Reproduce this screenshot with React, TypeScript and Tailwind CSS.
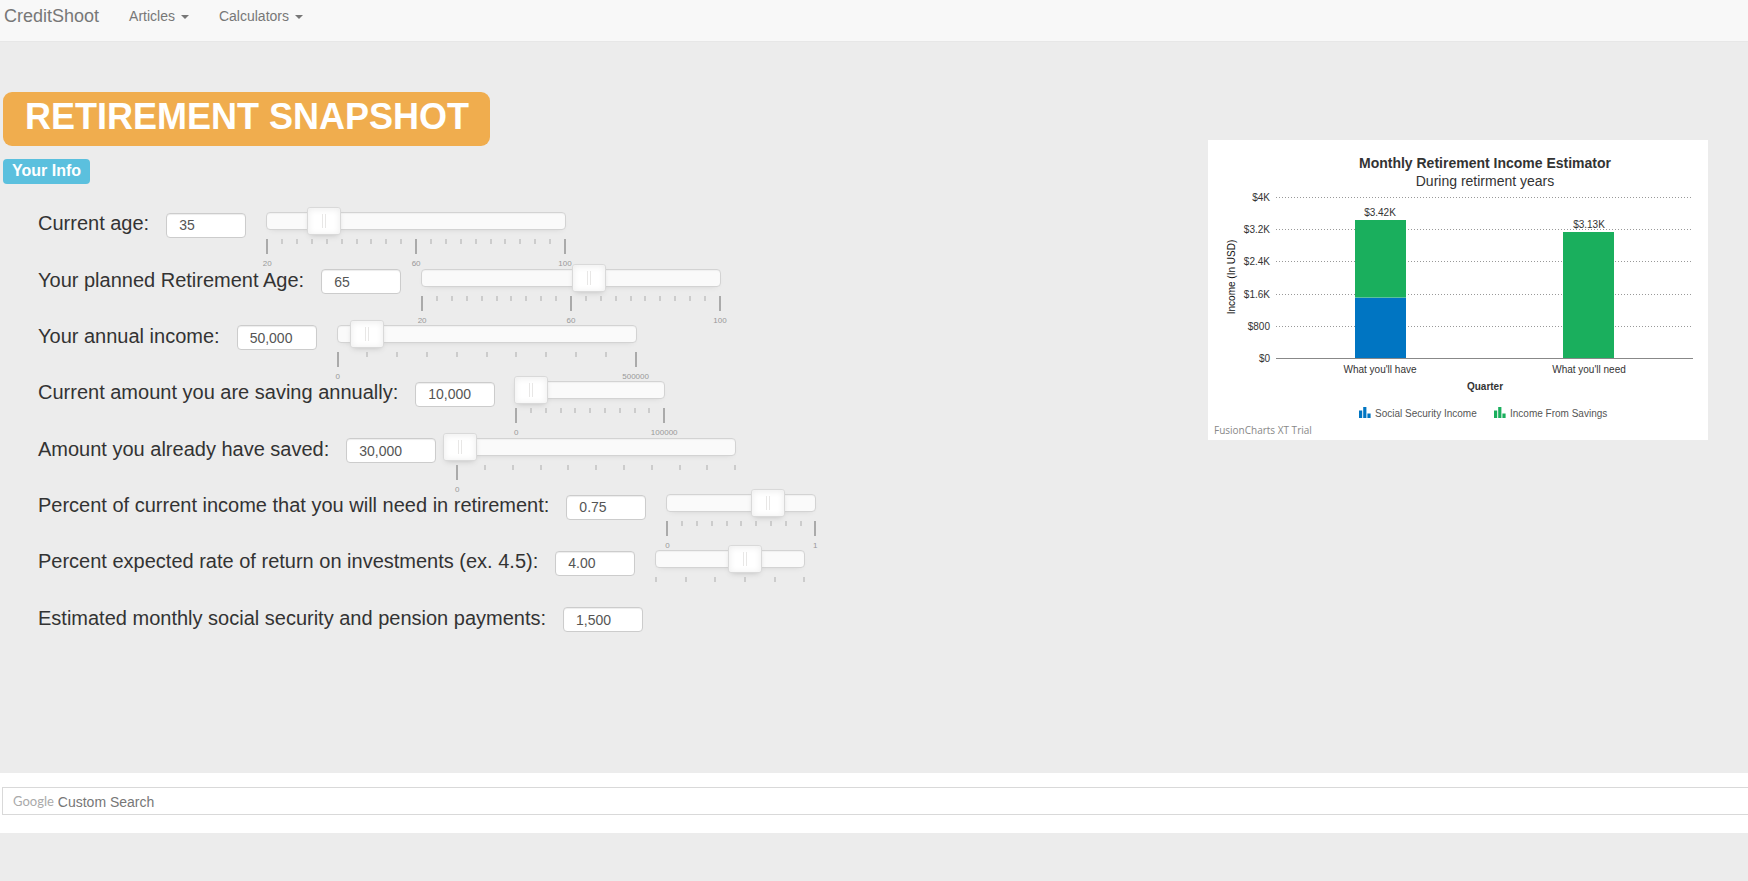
import { useId, useState } from "react";

type SliderSpec = {
  width: string;
  position: number;
  intervals: number;
  labels: Record<number, string>;
};

type Field = {
  label: string;
  value: string;
  inputWidth?: string;
  slider?: SliderSpec;
};

const fields: Field[] = [
  {
    label: "Current age:",
    value: "35",
    slider: { width: "w-[300px]", position: 19, intervals: 20, labels: { 0: "20", 10: "60", 20: "100" } },
  },
  {
    label: "Your planned Retirement Age:",
    value: "65",
    slider: { width: "w-[300px]", position: 56, intervals: 20, labels: { 0: "20", 10: "60", 20: "100" } },
  },
  {
    label: "Your annual income:",
    value: "50,000",
    slider: { width: "w-[300px]", position: 10, intervals: 10, labels: { 0: "0", 10: "500000" } },
  },
  {
    label: "Current amount you are saving annually:",
    value: "10,000",
    slider: { width: "w-[150px]", position: 10, intervals: 10, labels: { 0: "0", 10: "100000" } },
  },
  {
    label: "Amount you already have saved:",
    value: "30,000",
    inputWidth: "w-[90px]",
    slider: { width: "w-[280px]", position: 1, intervals: 10, labels: { 0: "0" } },
  },
  {
    label: "Percent of current income that you will need in retirement:",
    value: "0.75",
    slider: { width: "w-[150px]", position: 68, intervals: 10, labels: { 0: "0", 10: "1" } },
  },
  {
    label: "Percent expected rate of return on investments (ex. 4.5):",
    value: "4.00",
    slider: { width: "w-[150px]", position: 60, intervals: 5, labels: {} },
  },
  {
    label: "Estimated monthly social security and pension payments:",
    value: "1,500",
  },
];

function Slider({ spec, label }: { spec: SliderSpec; label: string }) {
  const [position, setPosition] = useState(spec.position);
  const ticks = Array.from({ length: spec.intervals + 1 }, (_, i) => i);

  return (
    <div
      className={`relative mb-1 ml-5 h-[18px] rounded border border-[#d3d3d3] bg-[#fafafa] shadow-[inset_0_1px_1px_#f0f0f0,0_3px_6px_-5px_#bbb] ${spec.width}`}
    >
      <div className="pointer-events-none absolute inset-x-0 top-[26px] flex justify-between">
        {ticks.map((tick) => (
          <div key={tick} className="flex w-0 flex-col items-center">
            {tick in spec.labels ? (
              <>
                <span className="h-[15px] w-[2px] shrink-0 bg-[#aaa]" />
                <span className="mt-1.5 text-[8px] leading-[8px] whitespace-nowrap text-[#999]">
                  {spec.labels[tick]}
                </span>
              </>
            ) : (
              <span className="h-[5px] w-[2px] shrink-0 bg-[#ccc]" />
            )}
          </div>
        ))}
      </div>
      <input
        type="range"
        min={0}
        max={100}
        value={position}
        aria-label={`${label} slider`}
        onChange={(e) => setPosition(Number(e.target.value))}
        className="absolute -top-1.5 -left-[17px] h-7 w-[calc(100%+34px)] cursor-pointer appearance-none bg-transparent [&::-webkit-slider-thumb]:h-7 [&::-webkit-slider-thumb]:w-[34px] [&::-webkit-slider-thumb]:appearance-none [&::-webkit-slider-thumb]:rounded-[3px] [&::-webkit-slider-thumb]:border [&::-webkit-slider-thumb]:border-solid [&::-webkit-slider-thumb]:border-[#d9d9d9] [&::-webkit-slider-thumb]:[background:linear-gradient(#e8e7e6,#e8e7e6)_14px_6px/1px_14px_no-repeat,linear-gradient(#e8e7e6,#e8e7e6)_17px_6px/1px_14px_no-repeat,#fff] [&::-webkit-slider-thumb]:[box-shadow:inset_0_0_1px_#fff,inset_0_1px_7px_#ebebeb,0_3px_6px_-3px_#bbb]"
      />
    </div>
  );
}

function FieldRow({ field }: { field: Field }) {
  const id = useId();
  const [value, setValue] = useState(field.value);

  return (
    <div className="flex items-center">
      <label htmlFor={id} className="text-[20px] leading-[28px] whitespace-nowrap">
        {field.label}
      </label>
      <input
        id={id}
        type="text"
        value={value}
        onChange={(e) => setValue(e.target.value)}
        className={`mt-1 ml-[17px] h-[25px] rounded border border-[#ccc] bg-white px-3 text-[14px] text-[#555] shadow-[inset_0_1px_1px_rgba(0,0,0,0.075)] ${field.inputWidth ?? "w-20"}`}
      />
      {field.slider && <Slider spec={field.slider} label={field.label} />}
    </div>
  );
}

function NavMenu({ title }: { title: string }) {
  return (
    <button type="button" className="flex items-center gap-1.5 text-[14px] leading-5 text-[#777]">
      {title}
      <svg width="8" height="4" viewBox="0 0 8 4" className="mt-0.5" aria-hidden="true">
        <path d="M0 0h8L4 4z" fill="currentColor" />
      </svg>
    </button>
  );
}

const yTicks = [
  { label: "$4K", y: 57 },
  { label: "$3.2K", y: 89 },
  { label: "$2.4K", y: 121 },
  { label: "$1.6K", y: 154 },
  { label: "$800", y: 186 },
  { label: "$0", y: 218 },
];

function LegendIcon({ x, fill }: { x: number; fill: string }) {
  return (
    <g fill={fill}>
      <rect x={x} y={270.5} width={3.2} height={7.5} />
      <rect x={x + 4.2} y={267} width={3.2} height={11} />
      <rect x={x + 8.4} y={273.5} width={3.2} height={4.5} />
    </g>
  );
}

function IncomeChart() {
  return (
    <svg
      width="500"
      height="300"
      viewBox="0 0 500 300"
      role="img"
      aria-label="Monthly Retirement Income Estimator"
      className="shrink-0 bg-white"
      fontSize="10"
      fill="#333"
    >
      <text x="277" y="28" textAnchor="middle" fontSize="14" fontWeight="bold">
        Monthly Retirement Income Estimator
      </text>
      <text x="277" y="46" textAnchor="middle" fontSize="14">
        During retirment years
      </text>
      {yTicks.map((tick) => (
        <g key={tick.label}>
          <text x="62" y={tick.y + 4} textAnchor="end">
            {tick.label}
          </text>
          {tick.label !== "$0" && (
            <path d={`M68 ${tick.y + 0.5}H484`} stroke="#999" strokeDasharray="1 2" fill="none" />
          )}
        </g>
      ))}
      <rect x="147" y="80" width="51" height="77" fill="#1aaf5d" />
      <rect x="147" y="157" width="51" height="61" fill="#0075c2" />
      <path d="M147 157.5h51" stroke="#5bbfa0" fill="none" />
      <rect x="355" y="92" width="51" height="126" fill="#1aaf5d" />
      <path d="M68 218.5H485" stroke="#888" fill="none" />
      <text x="172" y="76" textAnchor="middle">
        $3.42K
      </text>
      <text x="381" y="88" textAnchor="middle">
        $3.13K
      </text>
      <text x="172" y="233" textAnchor="middle">
        What you'll have
      </text>
      <text x="381" y="233" textAnchor="middle">
        What you'll need
      </text>
      <text x="277" y="250" textAnchor="middle" fontWeight="bold">
        Quarter
      </text>
      <text transform="translate(27 137) rotate(-90)" textAnchor="middle" fill="#111">
        Income (In USD)
      </text>
      <LegendIcon x={151} fill="#0075c2" />
      <text x="167" y="277" fill="#555">
        Social Security Income
      </text>
      <LegendIcon x={286} fill="#1aaf5d" />
      <text x="302" y="277" fill="#555">
        Income From Savings
      </text>
      <text x="6" y="294" fill="#888" className="font-['Open_Sans',sans-serif]">
        FusionCharts XT Trial
      </text>
    </svg>
  );
}

export default function App() {
  return (
    <div className="min-h-screen bg-[#ececec] font-['Liberation_Sans',Arial,sans-serif] text-[#333]">
      <nav className="flex h-[42px] items-center border-b border-[#e7e7e7] bg-[#f8f8f8] px-1 pb-2.5">
        <a href="#" className="text-[18px] leading-5 text-[#777]">
          CreditShoot
        </a>
        <div className="ml-[30px] flex gap-[30px]">
          <NavMenu title="Articles" />
          <NavMenu title="Calculators" />
        </div>
      </nav>

      <main className="flex items-start justify-between pt-[50px] pr-10 pb-[127px]">
        <div className="flex flex-col items-start pl-[3px]">
          <h1 className="h-[54px] rounded-[9px] bg-[#f0ad4e] pr-[21px] pl-[22px] text-[36px] leading-[49px] font-bold text-white">
            RETIREMENT SNAPSHOT
          </h1>
          <h2 className="mt-[13px] h-[25px] rounded bg-[#5bc0de] px-[9px] text-[16px] leading-[23px] font-bold text-white">
            Your Info
          </h2>
          <form className="mt-[11px] ml-[35px] grid min-h-[451px]">
            {fields.map((field) => (
              <FieldRow key={field.label} field={field} />
            ))}
          </form>
        </div>
        <div className="pt-12">
          <IncomeChart />
        </div>
      </main>

      <div className="bg-white pt-3.5 pb-[18px] pl-0.5">
        <label className="flex h-7 items-center border border-r-0 border-[#d9d9d9] pt-0.5 pl-2.5">
          <span className="font-[Lato,sans-serif] text-[13px] text-[#aaa]">Google</span>
          <input
            type="text"
            placeholder="Custom Search"
            className="ml-1 flex-1 bg-transparent text-[14px] outline-none placeholder:text-[#777]"
          />
        </label>
      </div>
    </div>
  );
}
